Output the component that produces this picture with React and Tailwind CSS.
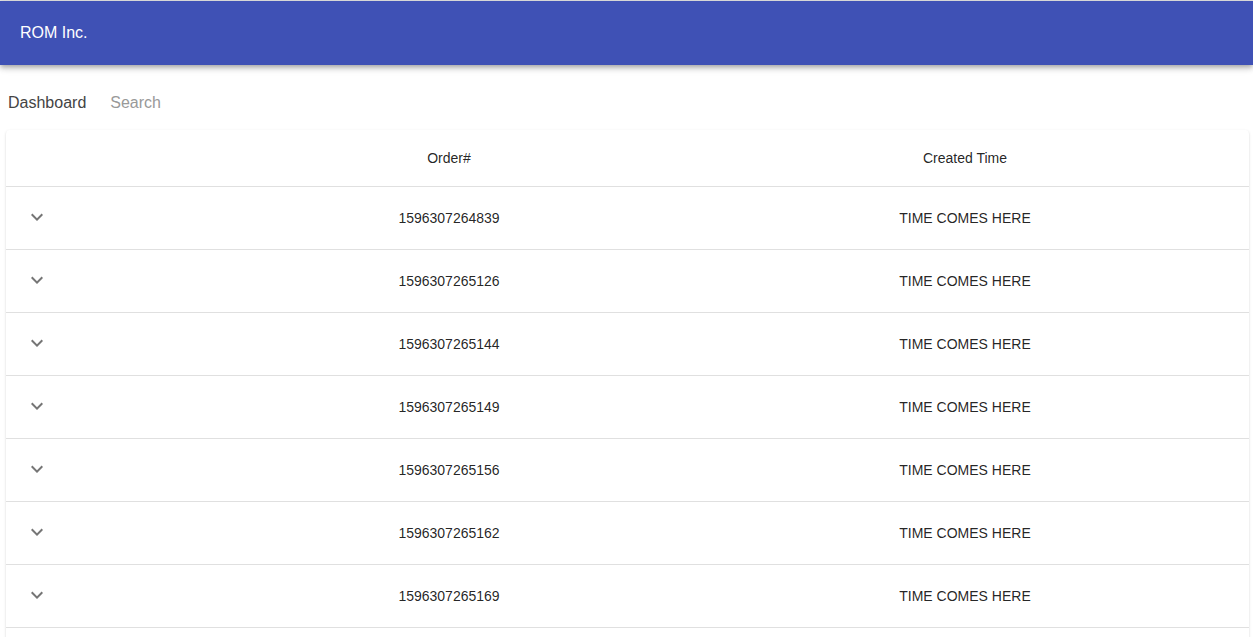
import React from "react";

const rows = [
  "1596307264839",
  "1596307265126",
  "1596307265144",
  "1596307265149",
  "1596307265156",
  "1596307265162",
  "1596307265169",
  "1596307265175",
  "1596307265181",
];

function Chevron() {
  return (
    <svg width="24" height="24" viewBox="0 0 24 24" fill="rgba(0,0,0,0.54)">
      <path d="M7.41 8.59L12 13.17l4.59-4.58L18 10l-6 6-6-6 1.41-1.41z" />
    </svg>
  );
}

export default function App() {
  return (
    <div className="min-h-screen bg-white" style={{ fontFamily: '"Liberation Sans", Arial, sans-serif' }}>
      <div className="h-px bg-[#e4e4e4]" />
      <header className="h-16 bg-[#3f51b5] flex items-center px-5 text-white text-base shadow-[0_2px_4px_-1px_rgba(0,0,0,0.2),0_4px_5px_0_rgba(0,0,0,0.14),0_1px_10px_0_rgba(0,0,0,0.12)] relative z-10">
        ROM Inc.
      </header>
      <nav className="flex items-center gap-6 px-2 pt-[29px] pb-[18px] text-base leading-[18px]">
        <span className="text-[#444]">Dashboard</span>
        <span className="text-[#999]">Search</span>
      </nav>
      <div className="mx-[6px] w-[1243px] rounded bg-white shadow-[0_2px_1px_-1px_rgba(0,0,0,0.2),0_1px_1px_0_rgba(0,0,0,0.14),0_1px_3px_0_rgba(0,0,0,0.12)]">
        <table className="w-full border-collapse table-fixed text-sm text-[rgba(0,0,0,0.87)]">
          <colgroup>
            <col className="w-[211px]" />
            <col className="w-[464px]" />
            <col className="w-[568px]" />
          </colgroup>
          <thead>
            <tr className="h-14 border-b border-[#e0e0e0]">
              <th className="font-normal"></th>
              <th className="font-normal text-center">Order#</th>
              <th className="font-normal text-center">Created Time</th>
            </tr>
          </thead>
          <tbody>
            {rows.map((r) => (
              <tr key={r} className="h-[63px] border-b border-[#e0e0e0]">
                <td className="pl-4">
                  <span className="inline-flex p-[3px] pt-[4px] pb-[2px]">
                    <Chevron />
                  </span>
                </td>
                <td className="text-center">{r}</td>
                <td className="text-center">TIME COMES HERE</td>
              </tr>
            ))}
          </tbody>
        </table>
      </div>
    </div>
  );
}
